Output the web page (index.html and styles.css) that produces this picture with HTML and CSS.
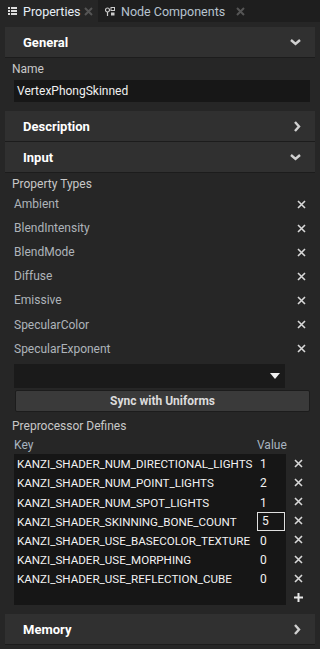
FILE: index.html
```html
<!DOCTYPE html>
<html lang="en">
<head>
    <meta charset="UTF-8">
    <title>Properties</title>
    <link rel="stylesheet" href="styles.css">
</head>
<body>
    <div class="tabs">
        <div class="tab active">
            <svg class="tab-icon" width="9" height="8" viewBox="0 0 9 8"><rect x="0" y="0" width="2" height="2" fill="#ddd"/><rect x="3" y="0" width="6" height="2" fill="#ddd"/><rect x="0" y="3" width="2" height="2" fill="#ddd"/><rect x="3" y="3" width="6" height="2" fill="#ddd"/><rect x="0" y="6" width="2" height="2" fill="#ddd"/><rect x="3" y="6" width="6" height="2" fill="#ddd"/></svg>
            <span>Properties</span>
            <svg class="tab-close" width="9" height="9" viewBox="0 0 9 9"><path d="M1 1L8 8M8 1L1 8" stroke="#555" stroke-width="2"/></svg>
        </div>
        <div class="tab">
            <svg class="tab-icon" width="10" height="9" viewBox="0 0 10 9"><circle cx="2.5" cy="3" r="2" fill="none" stroke="#ccc" stroke-width="1.2"/><path d="M2.5 5V9" stroke="#ccc" stroke-width="1.2"/><rect x="6" y="0.5" width="3.5" height="3" fill="none" stroke="#ccc" stroke-width="1"/><rect x="6" y="5.5" width="3.5" height="3" fill="#ccc"/></svg>
            <span>Node Components</span>
            <svg class="tab-close" width="9" height="9" viewBox="0 0 9 9"><path d="M1 1L8 8M8 1L1 8" stroke="#555" stroke-width="2"/></svg>
        </div>
    </div>

    <div class="panel">
        <div class="section-head">
            <span>General</span>
            <svg class="chev" width="11" height="7" viewBox="0 0 11 7"><path d="M1 1L5.5 5L10 1" fill="none" stroke="#d0d0d0" stroke-width="2.4"/></svg>
        </div>
        <div class="field">
            <div class="label">Name</div>
            <div class="input">VertexPhongSkinned</div>
        </div>

        <div class="section-head spaced">
            <span>Description</span>
            <svg class="chev" width="7" height="11" viewBox="0 0 7 11"><path d="M1 1L5 5.5L1 10" fill="none" stroke="#d0d0d0" stroke-width="2.4"/></svg>
        </div>
        <div class="section-head">
            <span>Input</span>
            <svg class="chev" width="11" height="7" viewBox="0 0 11 7"><path d="M1 1L5.5 5L10 1" fill="none" stroke="#d0d0d0" stroke-width="2.4"/></svg>
        </div>

        <div class="field">
            <div class="label">Property Types</div>
            <ul class="types">
                <li><span>Ambient</span><svg class="x" width="9" height="9" viewBox="0 0 9 9"><path d="M1 1L8 8M8 1L1 8" stroke="#d8d8d8" stroke-width="1.6"/></svg></li>
                <li><span>BlendIntensity</span><svg class="x" width="9" height="9" viewBox="0 0 9 9"><path d="M1 1L8 8M8 1L1 8" stroke="#d8d8d8" stroke-width="1.6"/></svg></li>
                <li><span>BlendMode</span><svg class="x" width="9" height="9" viewBox="0 0 9 9"><path d="M1 1L8 8M8 1L1 8" stroke="#d8d8d8" stroke-width="1.6"/></svg></li>
                <li><span>Diffuse</span><svg class="x" width="9" height="9" viewBox="0 0 9 9"><path d="M1 1L8 8M8 1L1 8" stroke="#d8d8d8" stroke-width="1.6"/></svg></li>
                <li><span>Emissive</span><svg class="x" width="9" height="9" viewBox="0 0 9 9"><path d="M1 1L8 8M8 1L1 8" stroke="#d8d8d8" stroke-width="1.6"/></svg></li>
                <li><span>SpecularColor</span><svg class="x" width="9" height="9" viewBox="0 0 9 9"><path d="M1 1L8 8M8 1L1 8" stroke="#d8d8d8" stroke-width="1.6"/></svg></li>
                <li><span>SpecularExponent</span><svg class="x" width="9" height="9" viewBox="0 0 9 9"><path d="M1 1L8 8M8 1L1 8" stroke="#d8d8d8" stroke-width="1.6"/></svg></li>
            </ul>
            <div class="dropdown">
                <svg width="10" height="6" viewBox="0 0 10 6"><path d="M0 0H10L5 6Z" fill="#f0f0f0"/></svg>
            </div>
            <div class="sync">Sync with Uniforms</div>
        </div>

        <div class="field defines-field">
            <div class="label">Preprocessor Defines</div>
            <div class="defines">
                <div class="def-head"><span class="key-col">Key</span><span>Value</span></div>
                <div class="def-body">
                    <div class="def-table">
                        <div class="row"><span class="key">KANZI_SHADER_NUM_DIRECTIONAL_LIGHTS</span><span class="val">1</span></div>
                        <div class="row"><span class="key">KANZI_SHADER_NUM_POINT_LIGHTS</span><span class="val">2</span></div>
                        <div class="row"><span class="key">KANZI_SHADER_NUM_SPOT_LIGHTS</span><span class="val">1</span></div>
                        <div class="row"><span class="key">KANZI_SHADER_SKINNING_BONE_COUNT</span><span class="val editing">5</span></div>
                        <div class="row"><span class="key">KANZI_SHADER_USE_BASECOLOR_TEXTURE</span><span class="val">0</span></div>
                        <div class="row"><span class="key">KANZI_SHADER_USE_MORPHING</span><span class="val">0</span></div>
                        <div class="row"><span class="key">KANZI_SHADER_USE_REFLECTION_CUBE</span><span class="val">0</span></div>
                    </div>
                    <div class="def-actions">
                        <svg class="x" width="9" height="9" viewBox="0 0 9 9"><path d="M1 1L8 8M8 1L1 8" stroke="#d8d8d8" stroke-width="1.6"/></svg>
                        <svg class="x" width="9" height="9" viewBox="0 0 9 9"><path d="M1 1L8 8M8 1L1 8" stroke="#d8d8d8" stroke-width="1.6"/></svg>
                        <svg class="x" width="9" height="9" viewBox="0 0 9 9"><path d="M1 1L8 8M8 1L1 8" stroke="#d8d8d8" stroke-width="1.6"/></svg>
                        <svg class="x" width="9" height="9" viewBox="0 0 9 9"><path d="M1 1L8 8M8 1L1 8" stroke="#d8d8d8" stroke-width="1.6"/></svg>
                        <svg class="x" width="9" height="9" viewBox="0 0 9 9"><path d="M1 1L8 8M8 1L1 8" stroke="#d8d8d8" stroke-width="1.6"/></svg>
                        <svg class="x" width="9" height="9" viewBox="0 0 9 9"><path d="M1 1L8 8M8 1L1 8" stroke="#d8d8d8" stroke-width="1.6"/></svg>
                        <svg class="x" width="9" height="9" viewBox="0 0 9 9"><path d="M1 1L8 8M8 1L1 8" stroke="#d8d8d8" stroke-width="1.6"/></svg>
                        <svg class="x" width="9" height="9" viewBox="0 0 9 9"><path d="M4.5 0V9M0 4.5H9" stroke="#e8e8e8" stroke-width="2"/></svg>
                    </div>
                </div>
            </div>
        </div>

        <div class="section-head spaced memory">
            <span>Memory</span>
            <svg class="chev" width="7" height="11" viewBox="0 0 7 11"><path d="M1 1L5 5.5L1 10" fill="none" stroke="#d0d0d0" stroke-width="2.4"/></svg>
        </div>
    </div>
</body>
</html>
```

FILE: styles.css
```css
* {
    margin: 0;
    padding: 0;
    box-sizing: border-box;
}

body {
    font-family: 'Roboto', 'Noto Sans', sans-serif;
    font-size: 12px;
    background-color: #262626;
    color: #c8c8c8;
    width: 320px;
    height: 649px;
    overflow: hidden;
}

.tabs {
    display: flex;
    height: 22px;
    background-color: #1e1e1e;
}

.tab {
    display: flex;
    align-items: center;
    color: #b8c4d0;
    font-size: 12.5px;
}

.tab.active {
    background-color: #262626;
    color: #e6eef6;
    width: 98px;
    padding-left: 8px;
}

.tab.active .tab-icon {
    margin-right: 6px;
}

.tab.active .tab-close {
    margin-left: auto;
    margin-right: 5px;
}

.tab:not(.active) {
    padding-left: 7px;
}

.tab:not(.active) .tab-icon {
    margin-right: 6px;
}

.tab:not(.active) .tab-close {
    margin-left: 11px;
}

.panel {
    padding: 5px 5px 0 5px;
}

.section-head {
    display: flex;
    align-items: center;
    justify-content: space-between;
    height: 31px;
    padding: 0 14px 0 18px;
    background-color: #303030;
    border-bottom: 1px solid #1c1c1c;
    color: #ffffff;
    font-weight: bold;
    font-size: 13px;
}

.section-head.spaced {
    margin-top: 9px;
}

.section-head.memory {
    margin-top: 9px;
}

.field {
    padding: 4px 5px 0 7px;
}

.label {
    color: #c8c8c8;
    height: 15px;
    line-height: 15px;
}

.input {
    margin: 3px 0 0 2px;
    height: 22px;
    line-height: 22px;
    padding-left: 3px;
    background-color: #171717;
    color: #f0f0f0;
}

.types {
    list-style: none;
}

.types li {
    display: flex;
    justify-content: space-between;
    align-items: center;
    height: 24.1px;
    padding: 0 4px 0 2px;
    color: #aeb4ba;
}

.dropdown {
    margin: 3px 25px 0 2px;
    height: 24px;
    background-color: #1a1a1a;
    display: flex;
    justify-content: flex-end;
    align-items: center;
    padding-right: 5px;
}

.sync {
    margin: 2px 0 0 3px;
    height: 22px;
    line-height: 20px;
    text-align: center;
    background-color: #3a3a3a;
    border: 1px solid #1c1c1c;
    border-radius: 2px;
    color: #dcdcdc;
    font-weight: bold;
}

.defines-field {
    padding-top: 7.5px;
}

.defines {
    margin-left: 2px;
}

.def-head {
    display: flex;
    margin-top: 1px;
    height: 19px;
    line-height: 21px;
    color: #a8b4c0;
}

.def-head .key-col {
    width: 243px;
}

.def-body {
    display: flex;
}

.def-table {
    width: 272px;
    height: 151px;
    background-color: #161616;
    padding-top: 0.5px;
}

.row {
    display: flex;
    height: 19.2px;
    align-items: center;
    color: #f2f2f2;
}

.row .key {
    width: 243px;
    padding-left: 3px;
    white-space: nowrap;
    font-size: 11.6px;
}

.row .val {
    padding-left: 3px;
    width: 28px;
}

.row .val.editing {
    border: 1px solid #e0e0e0;
    height: 19px;
    line-height: 17px;
    padding-left: 4px;
}

.def-actions {
    display: flex;
    flex-direction: column;
    align-items: center;
    width: 24px;
    padding-top: 4.5px;
    gap: 10.2px;
}
```
